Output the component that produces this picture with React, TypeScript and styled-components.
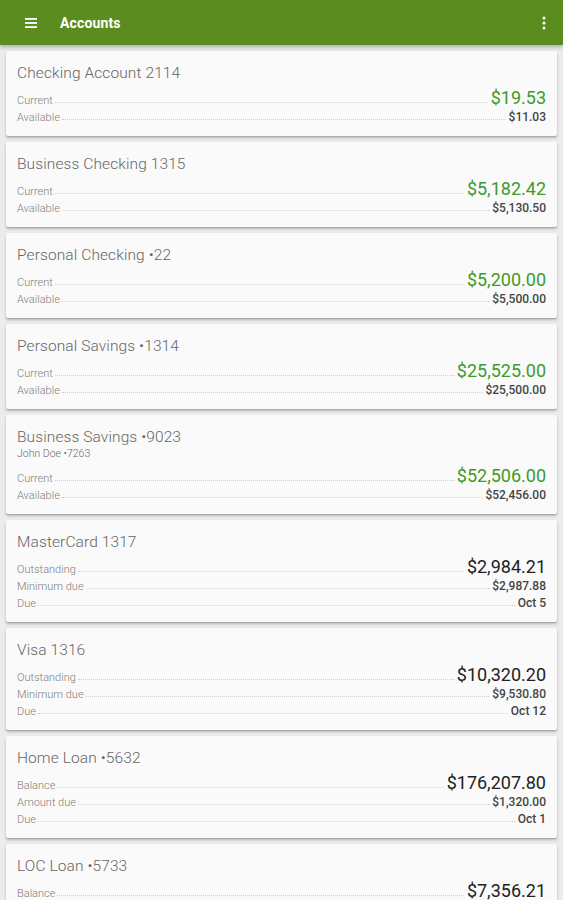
import React from "react";
import styled, { createGlobalStyle } from "styled-components";

type Row = { label: string; value: string };
type Account = {
  name: string;
  owner?: string;
  tone: "green" | "dark";
  rows: Row[];
};

const accounts: Account[] = [
  {
    name: "Checking Account 2114",
    tone: "green",
    rows: [
      { label: "Current", value: "$19.53" },
      { label: "Available", value: "$11.03" },
    ],
  },
  {
    name: "Business Checking 1315",
    tone: "green",
    rows: [
      { label: "Current", value: "$5,182.42" },
      { label: "Available", value: "$5,130.50" },
    ],
  },
  {
    name: "Personal Checking •22",
    tone: "green",
    rows: [
      { label: "Current", value: "$5,200.00" },
      { label: "Available", value: "$5,500.00" },
    ],
  },
  {
    name: "Personal Savings •1314",
    tone: "green",
    rows: [
      { label: "Current", value: "$25,525.00" },
      { label: "Available", value: "$25,500.00" },
    ],
  },
  {
    name: "Business Savings •9023",
    owner: "John Doe •7263",
    tone: "green",
    rows: [
      { label: "Current", value: "$52,506.00" },
      { label: "Available", value: "$52,456.00" },
    ],
  },
  {
    name: "MasterCard 1317",
    tone: "dark",
    rows: [
      { label: "Outstanding", value: "$2,984.21" },
      { label: "Minimum due", value: "$2,987.88" },
      { label: "Due", value: "Oct 5" },
    ],
  },
  {
    name: "Visa 1316",
    tone: "dark",
    rows: [
      { label: "Outstanding", value: "$10,320.20" },
      { label: "Minimum due", value: "$9,530.80" },
      { label: "Due", value: "Oct 12" },
    ],
  },
  {
    name: "Home Loan •5632",
    tone: "dark",
    rows: [
      { label: "Balance", value: "$176,207.80" },
      { label: "Amount due", value: "$1,320.00" },
      { label: "Due", value: "Oct 1" },
    ],
  },
  {
    name: "LOC Loan •5733",
    tone: "dark",
    rows: [
      { label: "Balance", value: "$7,356.21" },
      { label: "Amount due", value: "$350.00" },
      { label: "Due", value: "Oct 20" },
    ],
  },
];

function App() {
  return (
    <>
      <GlobalStyle />
      <Screen>
        <AppBar>
          <IconButton aria-label="menu">
            <svg width="14" height="12" viewBox="0 0 14 12">
              <rect x="1" y="1" width="12" height="1.8" fill="#fff" />
              <rect x="1" y="5.1" width="12" height="1.8" fill="#fff" />
              <rect x="1" y="9.2" width="12" height="1.8" fill="#fff" />
            </svg>
          </IconButton>
          <Title>Accounts</Title>
          <IconButton aria-label="more">
            <svg width="4" height="14" viewBox="0 0 4 14">
              <circle cx="2" cy="2" r="1.5" fill="#fff" />
              <circle cx="2" cy="7" r="1.5" fill="#fff" />
              <circle cx="2" cy="12" r="1.5" fill="#fff" />
            </svg>
          </IconButton>
        </AppBar>

        <List>
          {accounts.map((acc) => (
            <Card key={acc.name}>
              <CardName>{acc.name}</CardName>
              {acc.owner && <Owner>{acc.owner}</Owner>}
              <Rows>
                {acc.rows.map((row, i) => (
                  <Line key={row.label} $main={i === 0}>
                    <Label>{row.label}</Label>
                    <Leader />
                    <Value $main={i === 0} $tone={acc.tone}>
                      {row.value}
                    </Value>
                  </Line>
                ))}
              </Rows>
            </Card>
          ))}
        </List>
      </Screen>
    </>
  );
}

const GlobalStyle = createGlobalStyle`
  html, body {
    margin: 0;
    padding: 0;
    background: #ececec;
    overflow: hidden;
  }

  body {
    font-family: Roboto, "Liberation Sans", sans-serif;
  }
`;

const Screen = styled.div`
  width: 563px;
  height: 900px;
  overflow: hidden;
  background: #ececec;
`;

const AppBar = styled.header`
  height: 45px;
  background: #5a8c20;
  display: flex;
  align-items: center;
  padding: 0 5px 0 17px;
  box-shadow: 0 2px 4px rgba(0, 0, 0, 0.28);
  position: relative;
  z-index: 1;

  & > button:last-child {
    margin-left: auto;
  }
`;

const IconButton = styled.button`
  border: 0;
  background: none;
  padding: 0;
  width: 28px;
  height: 28px;
  display: flex;
  align-items: center;
  justify-content: center;
  cursor: pointer;
`;

const Title = styled.h1`
  margin: 0 0 0 15px;
  color: #fff;
  font-size: 14px;
  font-weight: 700;
  letter-spacing: 0.15px;
`;

const List = styled.main`
  display: flex;
  flex-direction: column;
  gap: 6px;
  padding: 6px 6px 0 6px;
`;

const Card = styled.section`
  background: #fafafa;
  border-radius: 2px;
  box-shadow: 0 1px 1px rgba(0, 0, 0, 0.12), 0 2px 3px rgba(0, 0, 0, 0.22);
  padding: 12px 11px 10px 11px;
`;

const CardName = styled.div`
  font-size: 15.5px;
  line-height: 20px;
  color: #666;
  font-weight: 300;
  letter-spacing: 0.1px;
`;

const Owner = styled.div`
  font-size: 10.5px;
  line-height: 14px;
  color: #6a6a6a;
  font-weight: 300;
`;

const Rows = styled.div`
  margin-top: 4px;
  display: flex;
  flex-direction: column;
`;

const Line = styled.div<{ $main: boolean }>`
  display: flex;
  align-items: baseline;
  height: ${(p) => (p.$main ? 22 : 17)}px;
  line-height: ${(p) => (p.$main ? 22 : 17)}px;
`;

const Label = styled.span`
  font-size: 11px;
  color: #7d7d7d;
  font-weight: 300;
  white-space: nowrap;
`;

const Leader = styled.span`
  flex: 1;
  height: 0;
  margin: 0 3px 0 2px;
  border-bottom: 1px dotted #cdcdcd;
  position: relative;
  top: -1px;
`;

const Value = styled.span<{ $main: boolean; $tone: "green" | "dark" }>`
  white-space: nowrap;
  font-size: ${(p) => (p.$main ? 18 : 12)}px;
  font-weight: ${(p) => (p.$main ? 400 : 500)};
  color: ${(p) =>
    p.$main ? (p.$tone === "green" ? "#3f9a2a" : "#222") : "#444"};
`;

export default App;
